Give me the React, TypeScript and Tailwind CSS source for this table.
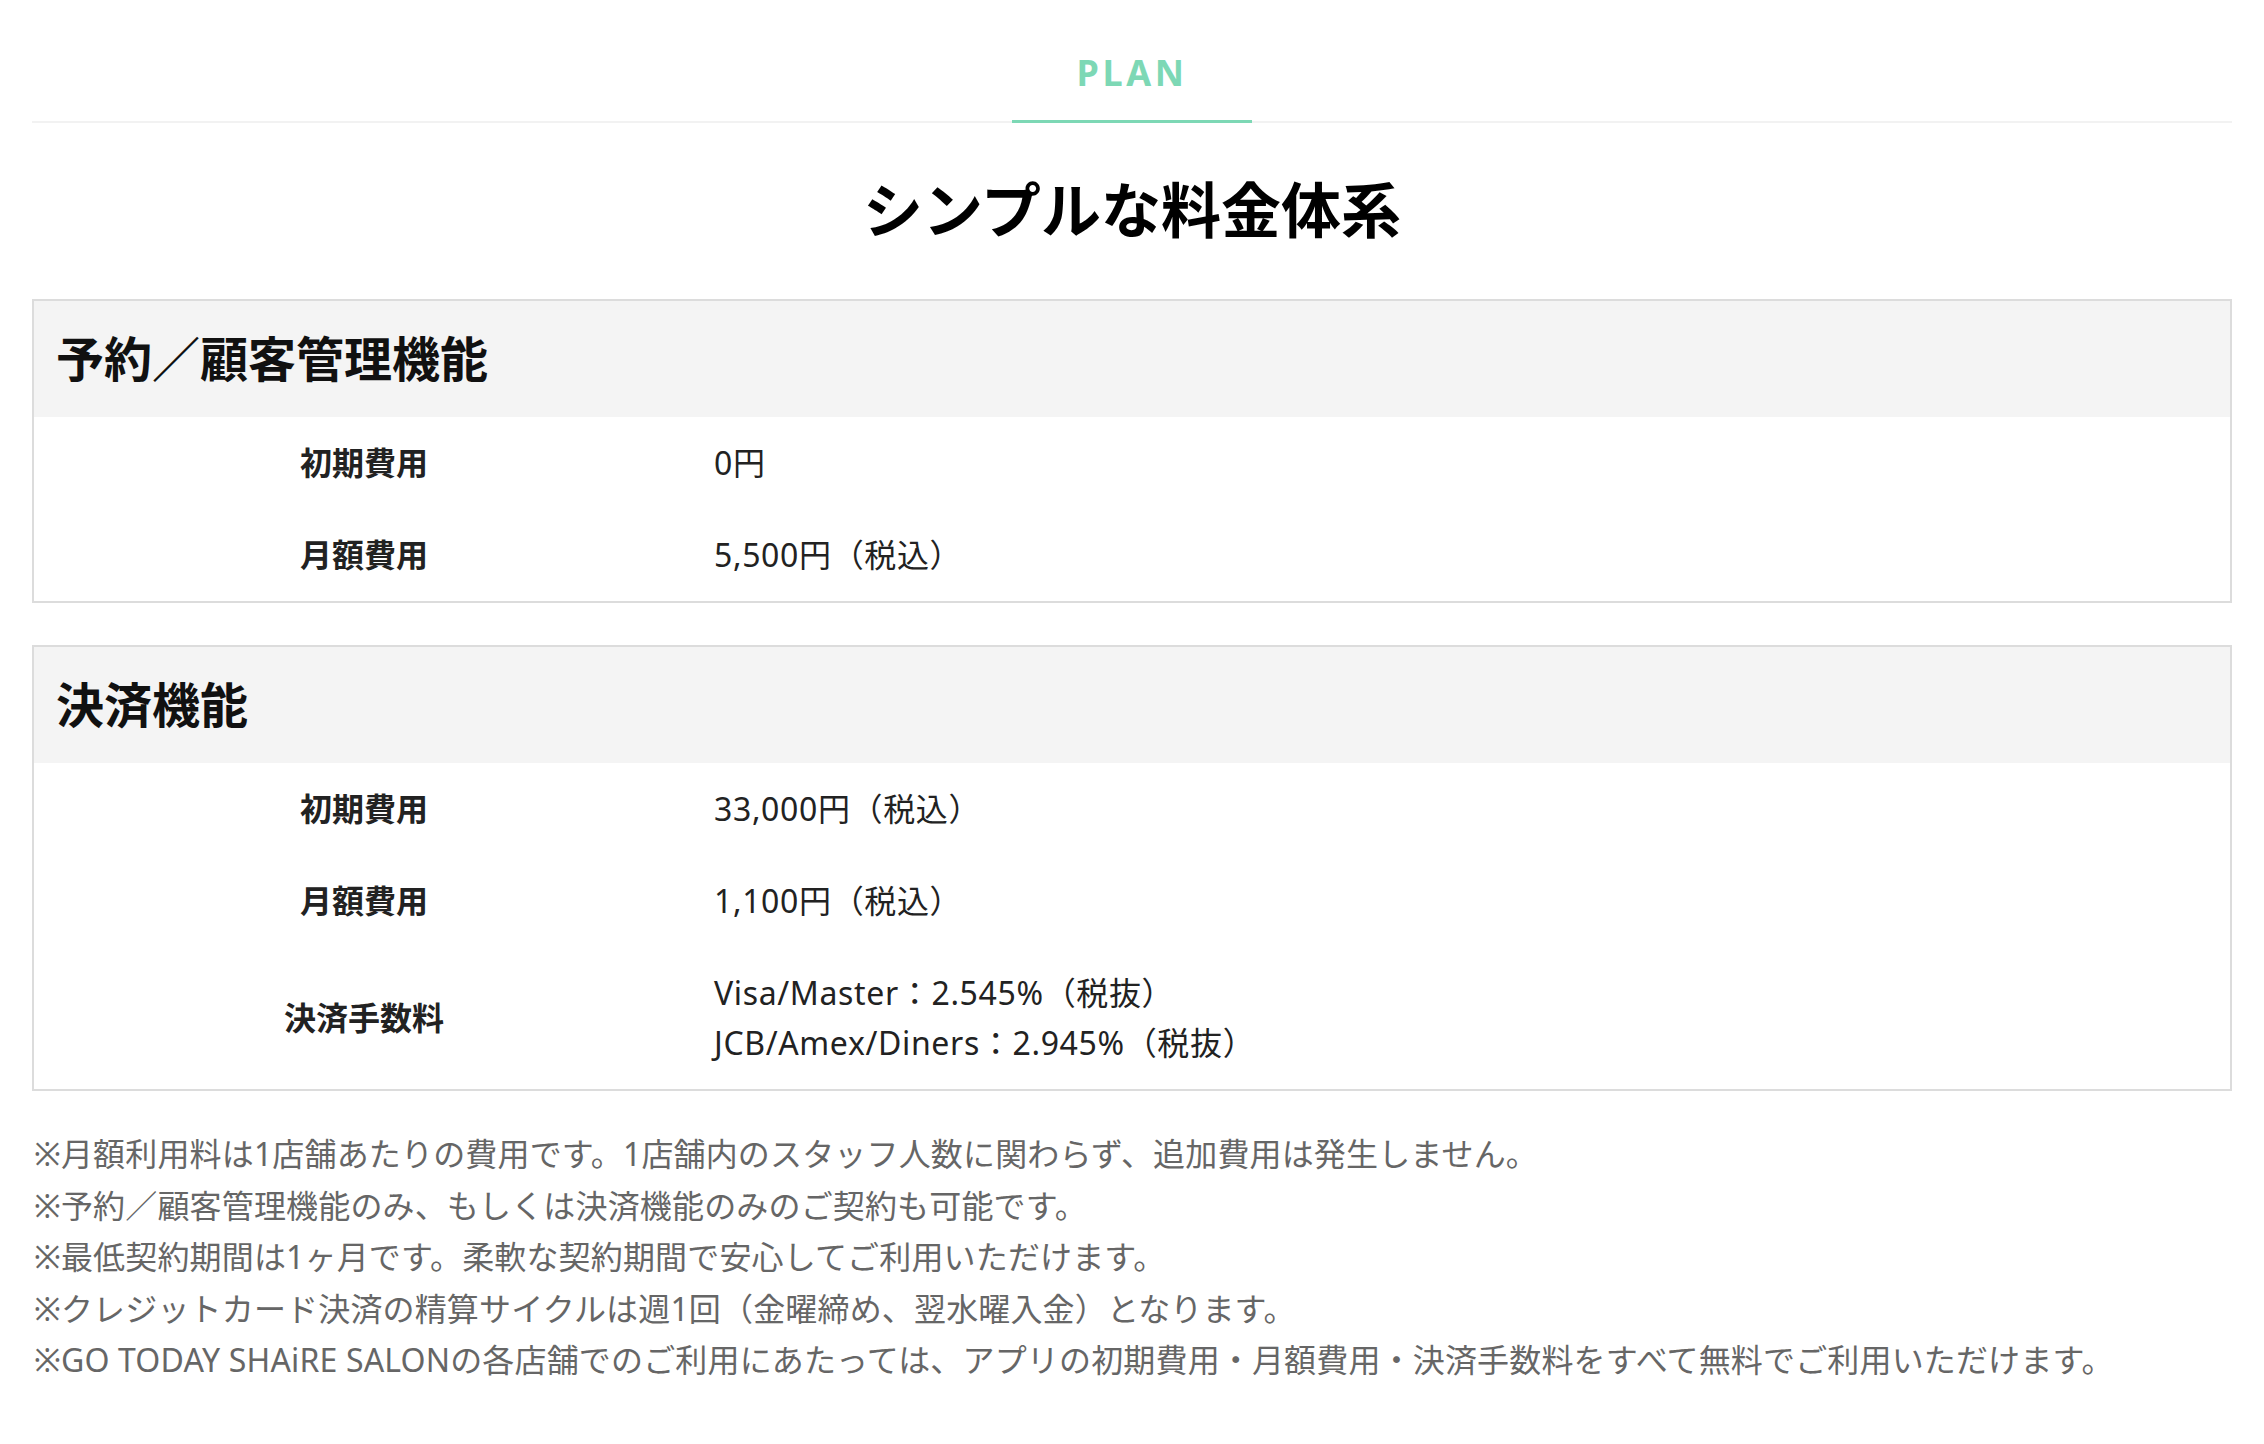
import React from "react";

const jp = "font-['Noto_Sans','Noto_Sans_CJK_JP',sans-serif]";

type Row = { label: string; values: string[] };

const plans: { title: string; rows: Row[] }[] = [
  {
    title: "予約／顧客管理機能",
    rows: [
      { label: "初期費用", values: ["0円"] },
      { label: "月額費用", values: ["5,500円（税込）"] },
    ],
  },
  {
    title: "決済機能",
    rows: [
      { label: "初期費用", values: ["33,000円（税込）"] },
      { label: "月額費用", values: ["1,100円（税込）"] },
      {
        label: "決済手数料",
        values: ["Visa/Master：2.545%（税抜）", "JCB/Amex/Diners：2.945%（税抜）"],
      },
    ],
  },
];

const notes = [
  "※月額利用料は1店舗あたりの費用です。1店舗内のスタッフ人数に関わらず、追加費用は発生しません。",
  "※予約／顧客管理機能のみ、もしくは決済機能のみのご契約も可能です。",
  "※最低契約期間は1ヶ月です。柔軟な契約期間で安心してご利用いただけます。",
  "※クレジットカード決済の精算サイクルは週1回（金曜締め、翌水曜入金）となります。",
  "※GO TODAY SHAiRE SALONの各店舗でのご利用にあたっては、アプリの初期費用・月額費用・決済手数料をすべて無料でご利用いただけます。",
];

function PlanCard({ title, rows }: { title: string; rows: Row[] }) {
  return (
    <div className="border-2 border-[#dcdcdc]">
      <div className="bg-[#f4f4f4] px-[22px] py-[22px]">
        <h3 className="text-[48px] leading-[72px] font-bold text-[#111]">{title}</h3>
      </div>
      <div>
        {rows.map((r, i) => (
          <div key={i} className="flex items-center py-[21px]">
            <div className="w-[660px] shrink-0 text-center text-[32px] leading-[50px] font-bold text-[#222]">
              {r.label}
            </div>
            <div className="pl-[20px] text-[32px] leading-[50px] tracking-[0.02em] text-[#222]">
              {r.values.map((v, j) => (
                <div key={j}>{v}</div>
              ))}
            </div>
          </div>
        ))}
      </div>
    </div>
  );
}

export default function App() {
  return (
    <div className={`${jp} bg-white min-h-[1444px] px-[32px] pt-[46px]`}>
      {/* heading */}
      <div className="border-b-2 border-[#f2f2f2] flex justify-center">
        <div className="w-[240px] border-b-[3px] border-[#7dd8b5] -mb-[2px] pb-[20px] text-center">
          <span className="font-bold text-[36px] leading-[54px] tracking-[0.1em] text-[#7dd8b5]">
            PLAN
          </span>
        </div>
      </div>

      <h2 className="mt-[47px] text-center text-[60px] leading-[80px] font-bold text-black">
        シンプルな料金体系
      </h2>

      <div className="mt-[49px] flex flex-col gap-[42px]">
        {plans.map((p, i) => (
          <PlanCard key={i} title={p.title} rows={p.rows} />
        ))}
      </div>

      <div className="mt-[37px] pl-[2px]">
        {notes.map((n, i) => (
          <p key={i} className="text-[32px] leading-[51.5px] tracking-[0.005em] text-[#666]">
            {n}
          </p>
        ))}
      </div>
    </div>
  );
}
